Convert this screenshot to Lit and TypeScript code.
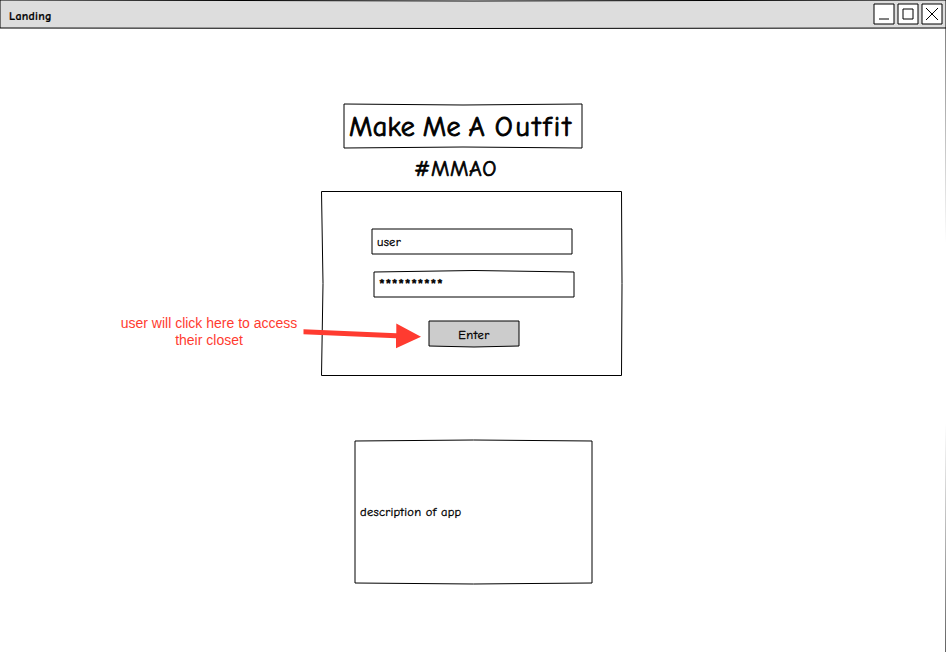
import { LitElement, html, svg, css } from "lit";
import { customElement, property } from "lit/decorators.js";

/** A box whose outline is drawn by hand: each side may bow by a pixel or two. */
@customElement("sketch-box")
class SketchBox extends LitElement {
  @property({ type: Number }) w = 100;
  @property({ type: Number }) h = 100;
  @property({ type: Number }) top = 0;
  @property({ type: Number }) right = 0;
  @property({ type: Number }) bottom = 0;
  @property({ type: Number }) left = 0;
  /** Shift of the outline, so that a straight side can fall on whole pixels. */
  @property({ type: Number }) shift = 0;
  @property() fill = "#fff";

  static styles = css`
    :host { display: block; position: relative; box-sizing: border-box; flex: none; }
    .outline { position: absolute; inset: 0; overflow: visible; }
    .content { position: relative; display: flex; width: 100%; height: 100%; align-items: center; }
  `;

  render() {
    const { w, h } = this;
    const d = `M0 0Q${w / 2} ${this.top} ${w} 0Q${w + this.right} ${h / 2} ${w} ${h}Q${w / 2} ${h + this.bottom} 0 ${h}Q${this.left} ${h / 2} 0 0Z`;
    return html`
      <svg class="outline" width=${w} height=${h}>
        ${svg`<path d=${d} transform="translate(${this.shift} ${this.shift})" fill=${this.fill} stroke="#000" stroke-width="1" stroke-linejoin="round" />`}
      </svg>
      <div class="content"><slot></slot></div>
    `;
  }
}

@customElement("app-root")
class AppRoot extends LitElement {
  static styles = css`
    :host {
      display: block;
      position: relative;
      width: 946px;
      height: 652px;
      overflow: hidden;
      background: #fff;
      color: #000;
      font: 400 12.5px/16px "Comic Sans MS", "Comic Neue", Inter, "Noto Sans", sans-serif;
      font-variant-ligatures: none;
      -webkit-text-stroke: 0.3px #000;
    }
    .bar { display: block; width: 946px; height: 28px; }
    .row { display: flex; flex: 1; align-items: center; padding: 3px 4px 3px 9px; }
    .name { flex: 1; font-weight: 700; font-size: 12px; letter-spacing: 0.25px; padding-top: 4px; -webkit-text-stroke-width: 0.2px; }
    .buttons { display: flex; gap: 4px; }
    .win { width: 20px; height: 20px; }
    .icon { display: block; width: 20px; height: 20px; fill: none; stroke: #000; }
    .page { display: flex; flex-direction: column; }
    .title { width: 238px; height: 44px; margin: 76px 0 0 344px; }
    .title-text {
      font-size: 28px; line-height: 44px; padding: 2px 0 0 5px; white-space: nowrap;
      letter-spacing: 0.3px; word-spacing: -2px; -webkit-text-stroke-width: 0.9px;
    }
    .wide { letter-spacing: 2.7px; margin-left: 2px; }
    .tag {
      margin: 6px 0 0 414px; font-size: 22px; line-height: 30px; height: 30px;
      letter-spacing: 0.6px; -webkit-text-stroke-width: 0.7px;
    }
    .login { width: 300px; height: 184px; margin: 7px 0 0 321px; }
    .form { display: flex; flex-direction: column; align-self: flex-start; padding: 38px 0 0 51px; }
    .field { width: 200px; height: 25px; }
    .field.pass { margin: 18px 0 0 2px; }
    .enter { width: 90px; height: 25px; margin: 24px 0 0 57px; }
    .value { padding-left: 5px; letter-spacing: 0.28px; }
    .stars { padding-left: 5px; font-weight: 700; font-size: 15px; letter-spacing: 0.75px; }
    .enter-text { flex: 1; text-align: center; padding-top: 3px; letter-spacing: 0.5px; }
    .about { width: 237px; height: 142px; margin: 66px 0 0 355px; }
    .edge { position: absolute; left: 0; top: 0; overflow: visible; fill: none; stroke: #000; }
    .note {
      position: absolute; left: 109px; top: 315px; width: 200px; text-align: center;
      font: 400 14px/17px "Liberation Sans", Arial, sans-serif; color: #ff3b30;
      -webkit-text-stroke-width: 0;
    }
    .arrow { position: absolute; left: 300px; top: 320px; fill: #ff3b30; }
  `;

  render() {
    return html`
      <sketch-box class="bar" w="946" h="28" fill="#ddd" top="2" bottom="1">
        <div class="row">
          <div class="name">Landing</div>
          <div class="buttons">
            <sketch-box class="win" w="20" h="20"><svg class="icon"><path d="M5 15H15" /></svg></sketch-box>
            <sketch-box class="win" w="20" h="20"><svg class="icon"><path d="M5 5H15V15H5Z" /></svg></sketch-box>
            <sketch-box class="win" w="20" h="20"><svg class="icon"><path d="M4 4L16 16M16 4L4 16" /></svg></sketch-box>
          </div>
        </div>
      </sketch-box>
      <div class="page">
        <sketch-box class="title" w="238" h="44" top="2" bottom="-2">
          <div class="title-text">Make Me A <span class="wide">Outfit</span></div>
        </sketch-box>
        <div class="tag">#MMAO</div>
        <sketch-box class="login" w="300" h="184" left="3" right="1" shift="0.5">
          <div class="form">
            <sketch-box class="field" w="200" h="25"><div class="value">user</div></sketch-box>
            <sketch-box class="field pass" w="200" h="25" top="-3"><div class="stars">**********</div></sketch-box>
            <sketch-box class="enter" w="90" h="25" fill="#ccc" bottom="2"><div class="enter-text">Enter</div></sketch-box>
          </div>
        </sketch-box>
        <sketch-box class="about" w="237" h="142" top="-2" bottom="2">
          <div class="value">description of app</div>
        </sketch-box>
      </div>
      <svg class="edge" width="946" height="652"><path d="M946 28Q947.5 340 945.9 652" /></svg>
      <div class="note">user will click here to access<br />their closet</div>
      <svg class="arrow" width="124" height="32">
        <path d="M3.5 9.3L96.3 13.2L96.3 3.5L121 16.8L96 28.3L96 18.3L3.5 14.2Z" />
      </svg>
    `;
  }
}
